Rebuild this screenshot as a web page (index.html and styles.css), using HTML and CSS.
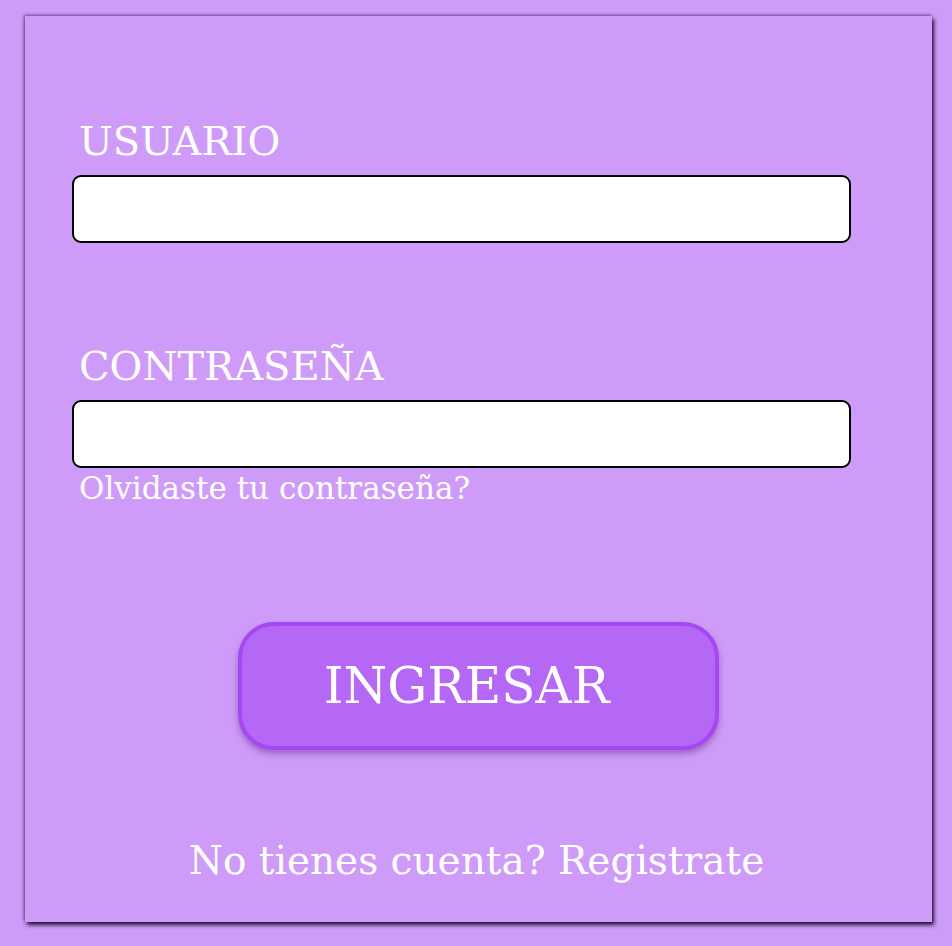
FILE: index.html
```html
<!DOCTYPE html>
<html lang="es">
<head>
<meta charset="utf-8">
<title>Login</title>
<link rel="stylesheet" href="styles.css">
</head>
<body>
<main class="card">
  <form class="login">
    <label class="label" for="user">USUARIO</label>
    <input class="field" id="user" type="text">
    <label class="label label-pass" for="pass">CONTRASEÑA</label>
    <input class="field" id="pass" type="password">
    <a class="forgot" href="#">Olvidaste tu contraseña?</a>
    <div class="actions">
      <button class="btn" type="button">INGRESAR</button>
    </div>
    <p class="register">No tienes cuenta? Registrate</p>
  </form>
</main>
</body>
</html>
```
FILE: styles.css
```css
html, body {
  margin: 0;
  padding: 0;
  background: #cd9bf8;
}
body {
  padding: 16px 0 24px 25px;
  font-family: "DejaVu Serif", "Liberation Serif", serif;
  color: #fff;
}
.card {
  box-sizing: border-box;
  width: 907px;
  height: 906px;
  background: #ce9cf8;
  box-shadow: 2px 3px 4px rgba(20, 0, 40, 0.9), -1px -1px 3px rgba(40, 0, 60, 0.55);
  padding: 102px 81px 0 47px;
}
.login {
  display: flex;
  flex-direction: column;
}
.label {
  font-size: 40px;
  line-height: 46px;
  padding-left: 7px;
  margin-bottom: 11px;
}
.label-pass {
  margin-top: 100px;
}
.field {
  box-sizing: border-box;
  width: 779px;
  height: 68px;
  margin: 0;
  border: 2px solid #000;
  border-radius: 9px;
  background: #fff;
  outline: none;
}
.forgot {
  font-size: 31px;
  line-height: 36px;
  margin-top: 2px;
  padding-left: 7px;
  color: #fff;
  text-decoration: none;
}
.actions {
  display: flex;
  justify-content: center;
  margin-top: 116px;
  padding-left: 34px;
}
.btn {
  box-sizing: border-box;
  width: 481px;
  height: 128px;
  border: 4px solid #a746f5;
  border-radius: 36px;
  background: #b568f6;
  color: #fff;
  font-family: "DejaVu Serif", "Liberation Serif", serif;
  font-size: 50px;
  padding: 0 24px 0 0;
  box-shadow: 0 4px 6px rgba(60, 0, 90, 0.35);
}
.register {
  margin: 88px 0 0 0;
  padding-left: 30px;
  text-align: center;
  font-size: 39px;
  line-height: 46px;
}
```
